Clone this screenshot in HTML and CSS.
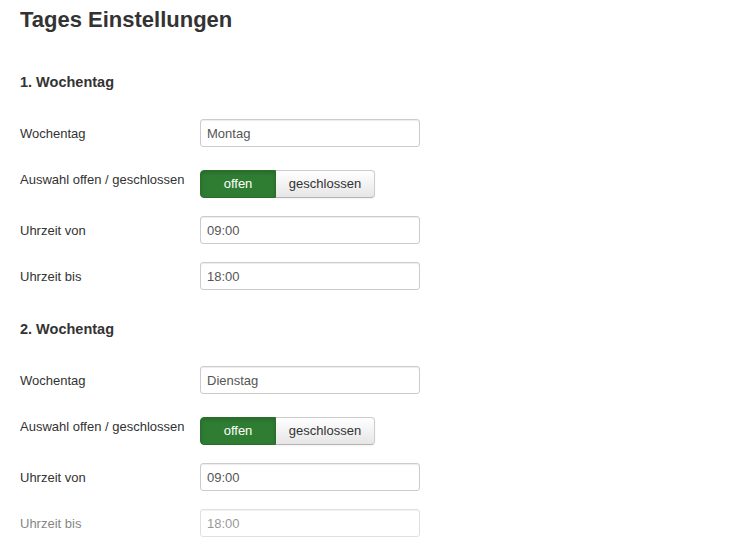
FILE: index.html
```html
<!DOCTYPE html>
<html lang="de">
<head>
<meta charset="utf-8">
<title>Tages Einstellungen</title>
<link rel="stylesheet" href="styles.css">
</head>
<body>
<main class="page">
  <h1 class="page-title">Tages Einstellungen</h1>

  <section class="day">
    <h3 class="day-title">1. Wochentag</h3>
    <div class="row">
      <label class="row-label">Wochentag</label>
      <input class="field" type="text" value="Montag">
    </div>
    <div class="row">
      <label class="row-label">Auswahl offen / geschlossen</label>
      <div class="btn-group">
        <span class="btn btn-on">offen</span>
        <span class="btn btn-off">geschlossen</span>
      </div>
    </div>
    <div class="row">
      <label class="row-label">Uhrzeit von</label>
      <input class="field" type="text" value="09:00">
    </div>
    <div class="row">
      <label class="row-label">Uhrzeit bis</label>
      <input class="field" type="text" value="18:00">
    </div>
  </section>

  <section class="day">
    <h3 class="day-title">2. Wochentag</h3>
    <div class="row">
      <label class="row-label">Wochentag</label>
      <input class="field" type="text" value="Dienstag">
    </div>
    <div class="row">
      <label class="row-label">Auswahl offen / geschlossen</label>
      <div class="btn-group">
        <span class="btn btn-on">offen</span>
        <span class="btn btn-off">geschlossen</span>
      </div>
    </div>
    <div class="row">
      <label class="row-label">Uhrzeit von</label>
      <input class="field" type="text" value="09:00">
    </div>
    <div class="row row-faded">
      <label class="row-label">Uhrzeit bis</label>
      <input class="field" type="text" value="18:00">
    </div>
  </section>
</main>
</body>
</html>
```

FILE: styles.css
```css
html, body {
  margin: 0;
  padding: 0;
  background: #ffffff;
}

html {
  height: 538px;
  overflow: hidden;
}

body {
  font-family: "Liberation Sans", Arial, sans-serif;
  font-size: 13px;
  color: #333333;
}

.page {
  padding: 8px 20px 0 20px;
}

.page-title {
  margin: 0 0 40px 0;
  font-size: 22px;
  line-height: 24px;
  font-weight: bold;
  color: #333333;
}

.day {
  display: flex;
  flex-direction: column;
  gap: 18px;
  margin-bottom: 29px;
}

.day-title {
  margin: 0 0 9px 0;
  font-size: 14.5px;
  line-height: 20px;
  font-weight: bold;
  color: #333333;
}

.row {
  display: flex;
  align-items: flex-start;
}

.row-label {
  width: 180px;
  flex: none;
  padding-top: 6px;
  line-height: 18px;
  font-size: 13px;
  color: #333333;
}

.field {
  box-sizing: border-box;
  width: 220px;
  height: 28px;
  margin: 0;
  padding: 4px 6px;
  font-family: "Liberation Sans", Arial, sans-serif;
  font-size: 13px;
  line-height: 18px;
  color: #555555;
  background: #ffffff;
  border: 1px solid #cccccc;
  border-radius: 3px;
  box-shadow: inset 0 1px 1px rgba(0, 0, 0, 0.075);
  outline: none;
}

.btn-group {
  display: flex;
  margin-top: 5px;
}

.btn {
  box-sizing: border-box;
  height: 28px;
  display: flex;
  align-items: center;
  justify-content: center;
  font-size: 13px;
  line-height: 18px;
  border: 1px solid;
}

.btn-on {
  width: 76px;
  color: #ffffff;
  background: #2f7d32;
  border-color: #2a6e2c;
  border-radius: 4px 0 0 4px;
  box-shadow: inset 0 2px 4px rgba(0, 0, 0, 0.15);
}

.btn-off {
  width: 99px;
  color: #333333;
  background: linear-gradient(#ffffff, #e6e6e6);
  border-color: #cccccc #cccccc #b3b3b3 #d4d4d4;
  border-left: 0;
  border-radius: 0 4px 4px 0;
  box-shadow: inset 0 1px 0 rgba(255, 255, 255, 0.2), 0 1px 2px rgba(0, 0, 0, 0.05);
}

.row-faded {
  opacity: 0.6;
}
```
